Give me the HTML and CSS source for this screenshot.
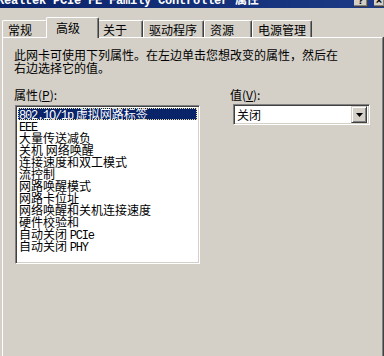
FILE: index.html
```html
<!DOCTYPE html>
<html lang="zh">
<head>
<meta charset="utf-8">
<title>属性</title>
<link rel="stylesheet" href="styles.css">
</head>
<body>
<div class="dialog">
  <div class="titlebar">
    <div class="title">Realtek PCIe FE Family Controller 属性</div>
    <div class="tbtn tbtn-help">?</div>
    <div class="tbtn tbtn-close">×</div>
  </div>
  <div class="tabs">
    <div class="tab w46">常规</div>
    <div class="tab tab-active">高级</div>
    <div class="tab w46">关于</div>
    <div class="tab w61">驱动程序</div>
    <div class="tab w48">资源</div>
    <div class="tab w60">电源管理</div>
  </div>
  <div class="panel">
    <p class="intro">此网卡可使用下列属性。在左边单击您想改变的属性，然后在<br>右边选择它的值。</p>
    <div class="props">
      <div class="col-left">
        <div class="label">属性(<u>P</u>):</div>
        <div class="listbox">
          <div class="row row-sel"><span class="lat">802.1Q/1p</span> 虚拟网路标签</div>
          <div class="row"><span class="lat">EEE</span></div>
          <div class="row">大量传送减负</div>
          <div class="row">关机 网络唤醒</div>
          <div class="row">连接速度和双工模式</div>
          <div class="row">流控制</div>
          <div class="row">网路唤醒模式</div>
          <div class="row">网路卡位址</div>
          <div class="row">网络唤醒和关机连接速度</div>
          <div class="row">硬件校验和</div>
          <div class="row">自动关闭 <span class="lat">PCIe</span></div>
          <div class="row">自动关闭 <span class="lat">PHY</span></div>
        </div>
      </div>
      <div class="col-right">
        <div class="label">值(<u>V</u>):</div>
        <div class="combo">
          <div class="combo-text">关闭</div>
          <div class="combo-btn">
            <svg width="7" height="4" viewBox="0 0 7 4"><path d="M0 0h7L3.5 4z" fill="#000"/></svg>
          </div>
        </div>
      </div>
    </div>
  </div>
</div>
</body>
</html>
```

FILE: styles.css
```css
html, body {
  margin: 0;
  padding: 0;
}
body {
  width: 384px;
  height: 356px;
  overflow: hidden;
  background: #d4d0c8;
  font-family: "Noto Sans CJK SC", "Noto Sans", sans-serif;
  font-size: 12px;
  color: #000;
}
.dialog {
  display: flex;
  flex-direction: column;
  height: 356px;
}
.titlebar {
  height: 8px;
  flex: none;
  display: flex;
  align-items: flex-end;
  background: linear-gradient(to right, #0a246a, #1c3a86);
  overflow: hidden;
}
.title {
  flex: 1;
  margin-left: -3px;
  font-family: "Liberation Mono", "Noto Sans CJK SC", monospace;
  font-weight: bold;
  font-size: 12px;
  line-height: 12px;
  color: #fff;
  white-space: nowrap;
  align-self: flex-start;
  margin-top: -5px;
  letter-spacing: -0.2px;
}
.tbtn {
  height: 12px;
  background: #d4d0c8;
  border-right: 1px solid #404040;
  border-bottom: 1px solid #404040;
  box-shadow: inset -1px -1px 0 #808080;
  font-family: "Liberation Sans", sans-serif;
  font-weight: bold;
  font-size: 11px;
  line-height: 12px;
  text-align: center;
  margin-bottom: 1px;
  color: #000;
  overflow: hidden;
  display: flex;
  align-items: flex-end;
  justify-content: center;
}
.tbtn-help {
  width: 13px;
  margin-right: 6px;
}
.tbtn-close {
  width: 10px;
  margin-right: -1px;
}
.tabs {
  height: 29px;
  flex: none;
  display: flex;
  align-items: flex-end;
  padding-left: 2px;
}
.tab {
  box-sizing: border-box;
  height: 17px;
  border-top: 1px solid #fff;
  border-left: 1px solid #fff;
  border-right: 1px solid #404040;
  box-shadow: inset -1px 0 0 #808080;
  border-radius: 2px 2px 0 0;
  padding: 2px 0 0 5px;
  line-height: 13px;
  white-space: nowrap;
}
.w46 { width: 46px; }
.w48 { width: 48px; }
.w60 { width: 60px; }
.w61 { width: 61px; }
.tab-active {
  width: 53px;
  height: 21px;
  margin: 0 -2px -1px -2px;
  padding: 3px 0 0 9px;
  background: #d4d0c8;
  position: relative;
  z-index: 1;
}
.panel {
  flex: 1;
  margin: 0 1px 0 2px;
  border-top: 1px solid #fff;
  border-left: 1px solid #fff;
  border-right: 1px solid #808080;
  box-shadow: 1px 0 0 #404040;
  padding: 0 0 0 11px;
}
.intro {
  margin: 10px 0 0 0;
  line-height: 13px;
  white-space: nowrap;
}
.props {
  margin-top: 14px;
  display: grid;
  grid-template-columns: 186px 138px;
  column-gap: 30px;
  align-items: start;
}
.label {
  line-height: 13px;
  height: 13px;
}
.listbox {
  box-sizing: border-box;
  margin: 4px 0 0 1px;
  width: 185px;
  height: 159px;
  background: #fff;
  border-top: 1px solid #808080;
  border-left: 1px solid #808080;
  border-right: 1px solid #fff;
  border-bottom: 1px solid #fff;
  box-shadow: inset 1px 1px 0 #404040, inset -1px -1px 0 #d4d0c8;
  padding: 2px 2px;
  overflow: hidden;
}
.row {
  height: 12px;
  line-height: 12px;
  padding-left: 1px;
  white-space: nowrap;
}
.row-sel {
  background: #0a246a;
  color: #fff;
  outline: 1px dotted #e8e0a0;
  outline-offset: -1px;
}
.lat {
  font-family: "Liberation Mono", monospace;
  font-size: 12px;
  letter-spacing: -1.2px;
}
.combo {
  box-sizing: border-box;
  margin: 3px 0 0 3px;
  width: 137px;
  height: 21px;
  display: flex;
  align-items: center;
  background: #fff;
  border-top: 1px solid #808080;
  border-left: 1px solid #808080;
  border-right: 1px solid #fff;
  border-bottom: 1px solid #fff;
  box-shadow: inset 1px 1px 0 #404040, inset -1px -1px 0 #d4d0c8;
  padding: 0 2px 0 2px;
}
.combo-text {
  flex: 1;
  line-height: 13px;
  padding-left: 1px;
}
.combo-btn {
  box-sizing: border-box;
  width: 16px;
  height: 17px;
  background: #d4d0c8;
  border-top: 1px solid #d4d0c8;
  border-left: 1px solid #d4d0c8;
  border-right: 1px solid #404040;
  border-bottom: 1px solid #404040;
  box-shadow: inset 1px 1px 0 #fff, inset -1px -1px 0 #808080;
  display: flex;
  align-items: center;
  justify-content: center;
}
.combo-btn svg {
  display: block;
}
```
